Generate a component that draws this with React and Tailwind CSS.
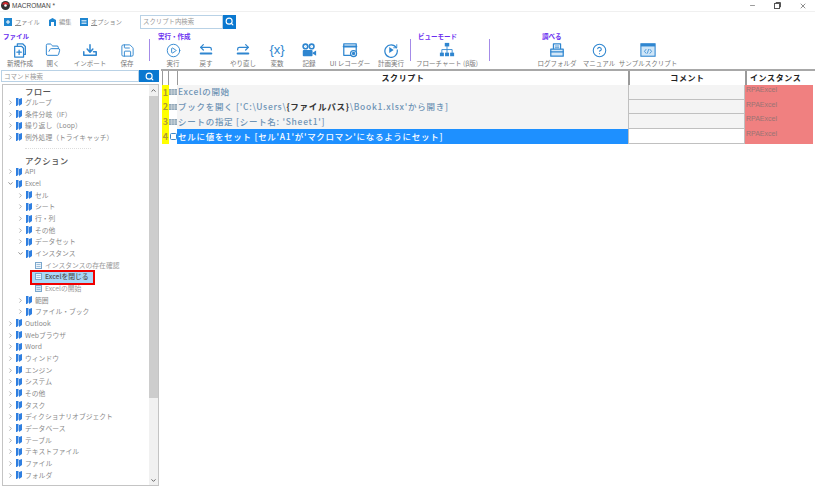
import React from "react";
import { Search, Minus, X, ChevronUp, ChevronDown, ChevronRight, FolderOpen, Save, CirclePlay, CircleHelp } from "lucide-react";

const jp = { fontFamily: '"Noto Sans CJK JP","Noto Sans",sans-serif' };
const B = "#2f86d0";

const Svg = ({ children, s = 16 }) => (
  <svg width={s} height={s} viewBox="0 0 18 18" fill="none" stroke={B} strokeWidth="1.4" strokeLinecap="round" strokeLinejoin="round">{children}</svg>
);
const NewIco = () => <Svg><path d="M6 4V2h6l3 3v9h-2" /><path d="M3 5h8l2 2v10H3z" /><path d="M8 9v5M5.5 11.5h5" /></Svg>;
const ImportIco = () => <Svg><path d="M9 3v8M5.8 8 9 11.5 12.2 8" strokeWidth="1.7" /><path d="M2 11v4h14v-4h-3" strokeWidth="1.7" /></Svg>;
const UndoIco = () => <Svg><path d="M6 3 3 6l3 3" /><path d="M3 6h10a2 2 0 0 1 2 2v1" /><path d="M3 13h12" strokeWidth="2.2" /></Svg>;
const RedoIco = () => <Svg><path d="M12 3l3 3-3 3" /><path d="M15 6H5a2 2 0 0 0-2 2v1" /><path d="M3 13h12" strokeWidth="2.2" /></Svg>;
const CamIco = () => <Svg><g fill={B} stroke="none"><circle cx="5" cy="5" r="3.5" /><circle cx="12" cy="5" r="3.5" /><rect x="2" y="9" width="11" height="7" rx="1" /><path d="M13 12l4-2.5v6L13 13z" /></g><circle cx="5" cy="5" r="1" stroke="#fff" /><circle cx="12" cy="5" r="1" stroke="#fff" /></Svg>;
const RecIco = () => <Svg><rect x="2" y="2" width="14" height="13" /><path d="M2 5h14" strokeWidth="2.4" /><circle cx="13" cy="13" r="3.4" fill="#fff" /><circle cx="13" cy="13" r="1.2" fill={B} /></Svg>;
const PlanIco = () => <Svg><path d="M15 6.5A7 7 0 1 0 16 9" /><path d="M15.5 3v3.5H12" strokeWidth="1" /><path d="M7 5.5 12 9l-5 3.5z" fill={B} stroke="none" /></Svg>;
const FlowIco = () => <Svg><g fill={B} stroke="none"><rect x="6.5" y="1" width="5" height="4" /><rect x="1" y="12" width="4.5" height="4" /><rect x="6.8" y="12" width="4.5" height="4" /><rect x="12.5" y="12" width="4.5" height="4" /></g><path d="M9 5v7M3.2 12V8.5h11.6V12" strokeWidth="1" /></Svg>;
const LogIco = () => <Svg><path d="M5 8V2h8v6" /><path d="M7 4.5h4M7 6.5h4" strokeWidth="1" /><path d="M2 8h14v8H2z" fill="#d4e8f8" /><path d="M2 11h14" /></Svg>;
const SampleIco = () => <svg width="16" height="16" viewBox="0 0 18 18"><rect x="1" y="2" width="16" height="14" fill="#cfe6f8" stroke={B} strokeWidth="1.2" /><rect x="1" y="2" width="16" height="3" fill={B} /><path d="M7 8l-2 2.5L7 13M11 8l2 2.5-2 2.5M9.8 8l-1.6 5" stroke={B} fill="none" strokeWidth=".9" /></svg>;
const VarIco = () => <span className="text-[13px] leading-[18px] text-[#2f86d0]" style={{ fontFamily: '"Liberation Sans",sans-serif' }}>{"{x}"}</span>;

const Item = ({ w, label, icon }) => (
  <div className={`${w} flex shrink-0 flex-col items-center`}>
    <div className="flex h-[18px] items-center justify-center">{icon}</div>
    <span className="whitespace-nowrap text-[6.5px] leading-[9px] text-[#777]">{label}</span>
  </div>
);
const Label = ({ children, cls }) => <div className={`${cls} h-[10px] whitespace-nowrap text-[6.5px] font-bold leading-[10px] text-[#6a2ff0]`}>{children}</div>;
const Divider = ({ cls }) => <div className={`${cls} mt-[8px] h-[22px] w-[1px] shrink-0 bg-[#a48be8]`} />;

const Book = ({ c = "#2f7fe0" }) => (
  <svg width="6" height="8" viewBox="0 0 6 8" className="shrink-0"><path d="M0 0h2.5v6.5L1 8H0zM3 1l3-1v6L3 8z" fill={c} /></svg>
);
const Leaf = ({ faded }) => (
  <svg width="7" height="7" viewBox="0 0 7 7" className="shrink-0"><rect x=".5" y=".5" width="6" height="6" fill={faded ? "#d6e8f6" : "#eef5fb"} stroke="#7ba7cc" /><path d="M1.5 2.5h4M1.5 4.5h4" stroke="#7ba7cc" strokeWidth=".7" /></svg>
);

const Row = ({ lv = 0, open, label, cls = "" }) => (
  <div className={`flex h-[11.66px] items-center whitespace-nowrap ${cls}`}>
    <div className={lv === 1 ? "w-[14px] shrink-0" : "w-[4px] shrink-0"} />
    <div className="flex w-[9px] shrink-0 items-center">
      {open ? <ChevronDown size={7} color="#444" strokeWidth={2} /> : <ChevronRight size={7} color="#777" strokeWidth={2} />}
    </div>
    <div className="mr-[3px] ml-[0px] flex"><Book /></div>
    <span className="text-[6.8px] leading-[11px] text-[#8a8a8a]">{label}</span>
  </div>
);
const LeafRow = ({ label, faded }) => (
  <div className="flex h-[11.66px] items-center whitespace-nowrap pl-[32px]">
    <Leaf faded={faded} />
    <span className="ml-[3px] text-[6.8px] leading-[11px] text-[#9a9a9a]">{label}</span>
  </div>
);
const Heading = ({ children }) => <div className="h-[11.66px] pl-[22px] pt-[1px] text-[8.5px] font-medium leading-[11.66px] tracking-[0.3px] text-[#555]">{children}</div>;

const SearchBtn = ({ w }) => (
  <div className={`${w} flex h-full shrink-0 items-center justify-center bg-[#0a78d0]`}><Search size={9} color="#fff" strokeWidth={3} /></div>
);

const HeadCell = ({ w, children, cls = "" }) => (
  <div className={`${w} flex h-full items-center pb-[1px] border-l border-[#9a9a9a] text-[8px] font-bold tracking-[0.6px] text-[#222] ${cls}`}>{children}</div>
);

const scripts = [
  { t: <>Excelの開始</> },
  { t: <>ブックを開く ['C:\Users\<b className="text-[#333]">{"{ファイルパス}"}</b>\Book1.xlsx'から開き]</> },
  { t: <>シートの指定 [シート名: 'Sheet1']</> },
  { t: <>セルに値をセット [セル'A1'が'マクロマン'になるようにセット]</>, sel: true },
];

const ScriptRow = ({ n, t, sel }) => (
  <div className="flex h-[14.7px]">
    <div className="w-[1px] shrink-0" />
    <div className="flex w-[7px] shrink-0 items-center justify-center bg-[#ffff00] text-[9px] font-bold text-[#b09a30]">{n}</div>
    <div className="flex w-[8px] shrink-0 items-center justify-center">
      {sel ? <svg width="7" height="7" viewBox="0 0 7 7"><rect x=".5" y=".5" width="6" height="6" rx="1" fill="#fff" stroke="#3b87c8" /></svg>
        : <svg width="8" height="6" viewBox="0 0 8 6"><rect width="8" height="6" fill="#8fa6b8" /><path d="M0 2h8M0 4h8M2.7 0v6M5.3 0v6" stroke="#eee" strokeWidth=".5" /></svg>}
    </div>
    <div className={`flex w-[451px] shrink-0 items-center whitespace-nowrap pb-[1px] pl-[1px] text-[8.5px] font-medium tracking-[0.72px] ${sel ? "bg-[#1e90ff] text-white" : "bg-[#f4f4f4] text-[#6e93b5]"}`}>{t}</div>
    <div className={`w-[117px] shrink-0 border-x border-b border-[#c0c0c0] ${sel ? "bg-white" : "bg-[#f4f4f4]"}`} />
    <div className="flex w-[68px] shrink-0 items-start bg-[#f08080] pl-[1px] text-[7px] leading-[9px] text-[#9a7474]" style={{ fontFamily: '"Liberation Sans",sans-serif' }}>RPAExcel</div>
  </div>
);

export default function App() {
  return (
    <div className="flex h-[486px] w-[815px] flex-col overflow-hidden bg-white" style={jp}>
      {/* title bar */}
      <div className="flex h-[12px] shrink-0 items-center border-b border-[#f0f0f0] pl-[1px] pr-[8px]">
        <svg width="9" height="9" viewBox="0 0 9 9"><circle cx="4.5" cy="4.5" r="4.5" fill="#333" /><path d="M1 3.5a3.7 3.7 0 0 1 7 0z" fill="#d9262c" /><circle cx="4.5" cy="4.5" r="1.3" fill="#fff" /></svg>
        <span className="ml-[2px] text-[6.5px] text-[#444]" style={{ fontFamily: '"Liberation Sans",sans-serif' }}>MACROMAN *</span>
        <div className="ml-auto flex items-center gap-[18px]">
          <Minus size={7} color="#555" />
          <svg width="7" height="7" viewBox="0 0 7 7" fill="none" stroke="#555"><rect x=".5" y="1.5" width="5" height="5" /><path d="M2 1V.5h4.5V5H6" /></svg>
          <X size={8} color="#555" />
        </div>
      </div>
      {/* menu */}
      <div className="flex h-[19px] shrink-0 items-center pl-[4px] text-[6.2px] text-[#8a8a8a]">
        <svg width="8" height="8" viewBox="0 0 8 8" className="shrink-0"><rect width="8" height="8" fill="#1f86d0" /><path d="M4 2v4M2 4h4" stroke="#fff" /></svg>
        <span className="ml-[3px] w-[33px]"><u>フ</u>ァイル</span>
        <svg width="9" height="8" viewBox="0 0 9 8" className="shrink-0"><path d="M1 8V2l3.5-2L8 2v6H6V4H3v4z" fill="#1f86d0" /></svg>
        <span className="ml-[2px] w-[21px]">編集</span>
        <svg width="8" height="8" viewBox="0 0 8 8" className="shrink-0"><rect width="8" height="8" fill="#1f86d0" /><path d="M1.5 2.5h5M1.5 4h5M1.5 5.5h5" stroke="#fff" strokeWidth=".7" /></svg>
        <span className="ml-[3px] w-[49px]"><u>オ</u>プション</span>
        <div className="flex h-[14px] w-[96px] shrink-0">
          <div className="flex-1 border border-[#b9d2e6] bg-white pl-[2px] text-[6.4px] leading-[12px] text-[#999]">スクリプト内検索</div>
          <SearchBtn w="w-[13px]" />
        </div>
      </div>
      {/* ribbon */}
      <div className="flex h-[38px] shrink-0 pl-[3px]">
        <div className="w-[146px] shrink-0">
          <Label>ファイル</Label>
          <div className="flex">
            <Item w="w-[34px]" label="新規作成" icon={<NewIco />} />
            <Item w="w-[32px]" label="開く" icon={<FolderOpen size={16} color={B} strokeWidth={1.5} />} />
            <Item w="w-[42px]" label="インポート" icon={<ImportIco />} />
            <Item w="w-[32px]" label="保存" icon={<Save size={15} color={B} strokeWidth={1.5} />} />
          </div>
        </div>
        <Divider />
        <div className="ml-[7px] shrink-0">
          <Label cls="pl-[1px]">実行・作成</Label>
          <div className="flex">
            <Item w="w-[32px]" label="実行" icon={<CirclePlay size={15} color={B} strokeWidth={1.5} />} />
            <Item w="w-[34px]" label="戻す" icon={<UndoIco />} />
            <Item w="w-[40px]" label="やり直し" icon={<RedoIco />} />
            <Item w="w-[28px]" label="変数" icon={<VarIco />} />
            <Item w="w-[36px]" label="記録" icon={<CamIco />} />
            <Item w="w-[46px]" label="UI レコーダー" icon={<RecIco />} />
            <Item w="w-[36px]" label="計画実行" icon={<PlanIco />} />
          </div>
        </div>
        <Divider cls="ml-[1px]" />
        <div className="w-[78px] shrink-0">
          <Label cls="pl-[7px]">ビューモード</Label>
          <div className="flex"><Item w="w-[72px]" label="フローチャート (β版)" icon={<FlowIco />} /></div>
        </div>
        <Divider />
        <div className="ml-[45px] shrink-0">
          <Label cls="pl-[7px]">調べる</Label>
          <div className="flex">
            <Item w="w-[44px]" label="ログフォルダ" icon={<LogIco />} />
            <Item w="w-[40px]" label="マニュアル" icon={<CircleHelp size={15} color={B} strokeWidth={1.7} />} />
            <Item w="w-[58px]" label="サンプルスクリプト" icon={<SampleIco />} />
          </div>
        </div>
      </div>
      {/* main */}
      <div className="flex min-h-0 flex-1">
        <div className="flex w-[161px] shrink-0 flex-col pl-[1px] pt-[1px]">
          <div className="flex h-[12px] w-[158px] shrink-0">
            <div className="flex-1 border border-[#b9d2e6] pl-[2px] text-[6.5px] leading-[10px] text-[#999]">コマンド検索</div>
            <SearchBtn w="w-[20px]" />
          </div>
          <div className="mt-[2px] ml-[1px] flex min-h-0 flex-1 w-[157px] border border-[#c4c4c4]">
            <div className="min-w-0 flex-1 overflow-hidden">
              <Heading>フロー</Heading>
              <Row label="グループ" />
              <Row label="条件分岐（IF）" />
              <Row label="繰り返し（Loop）" />
              <Row label="例外処理（トライキャッチ）" />
              <div className="flex h-[11.2px] items-center pl-[22px]"><div className="h-[1px] w-[66px] border-t border-dotted border-[#ddd]" /></div>
              <Heading>アクション</Heading>
              <Row label="API" />
              <Row open label="Excel" />
              <Row lv={1} label="セル" />
              <Row lv={1} label="シート" />
              <Row lv={1} label="行・列" />
              <Row lv={1} label="その他" />
              <Row lv={1} label="データセット" />
              <Row lv={1} open label="インスタンス" />
              <LeafRow label="インスタンスの存在確認" />
              <div className="relative">
                <div className="absolute left-[27px] top-[-1px] h-[15px] w-[65px] border-[2px] border-[#f00000] bg-[#a8d8f8]" />
                <div className="relative">
                  <LeafRow label={<b className="font-medium text-[#555]">Excelを閉じる</b>} />
                </div>
              </div>
              <LeafRow label="Excelの開始" faded />
              <Row lv={1} label="範囲" />
              <Row lv={1} label="ファイル・ブック" />
              <Row label="Outlook" />
              <Row label="Webブラウザ" />
              <Row label="Word" />
              <Row label="ウィンドウ" />
              <Row label="エンジン" />
              <Row label="システム" />
              <Row label="その他" />
              <Row label="タスク" />
              <Row label="ディクショナリオブジェクト" />
              <Row label="データベース" />
              <Row label="テーブル" />
              <Row label="テキストファイル" />
              <Row label="ファイル" />
              <Row label="フォルダ" />
            </div>
            <div className="flex w-[9px] shrink-0 flex-col items-center bg-[#f1f1f1]">
              <div className="flex h-[11px] shrink-0 items-center"><ChevronUp size={7} color="#555" strokeWidth={3} /></div>
              <div className="h-[302px] w-full shrink-0 bg-[#cdcdcd]" />
              <div className="mt-auto flex h-[10px] items-center"><ChevronDown size={7} color="#555" strokeWidth={3} /></div>
            </div>
          </div>
        </div>
        <div className="min-w-0 flex-1 pt-0">
          <div className="flex h-[16px] border-t-2 border-[#a8a8a8]">
            <div className="w-[1px] shrink-0" />
            <div className="w-[6px] shrink-0 border-l border-[#9a9a9a]" />
            <div className="w-[9px] shrink-0 border-l border-[#9a9a9a]" />
            <HeadCell w="w-[451px] justify-center">スクリプト</HeadCell>
            <HeadCell w="w-[117px] justify-center" cls="border-l-2">コメント</HeadCell>
            <HeadCell w="w-[68px] pl-[3px]" cls="border-l-2">インスタンス</HeadCell>
          </div>
          {scripts.map((s, i) => <ScriptRow key={i} n={i + 1} t={s.t} sel={s.sel} />)}
        </div>
      </div>
    </div>
  );
}
